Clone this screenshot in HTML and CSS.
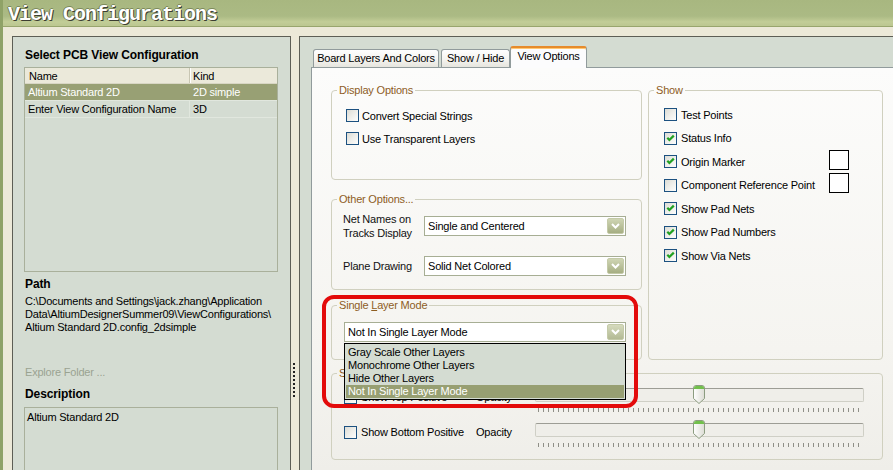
FILE: index.html
```html
<!DOCTYPE html>
<html>
<head>
<meta charset="utf-8">
<title>View Configurations</title>
<link rel="stylesheet" href="styles.css">
</head>
<body>
<div class="window">
  <div class="titlebar">View Configurations</div>
  <div class="main">
    <div class="left-panel">
      <div class="heading first">Select PCB View Configuration</div>
      <div class="config-table">
        <div class="trow thead"><div class="c1">Name</div><div class="c2">Kind</div></div>
        <div class="trow selected"><div class="c1">Altium Standard 2D</div><div class="c2">2D simple</div></div>
        <div class="trow"><div class="c1">Enter View Configuration Name</div><div class="c2">3D</div></div>
      </div>
      <div class="heading">Path</div>
      <div class="path">C:\Documents and Settings\jack.zhang\Application<br>Data\AltiumDesignerSummer09\ViewConfigurations\<br>Altium Standard 2D.config_2dsimple</div>
      <div class="explore">Explore Folder ...</div>
      <div class="heading desc-head">Description</div>
      <div class="desc">Altium Standard 2D</div>
    </div>
    <div class="splitter"><div class="grip"></div></div>
    <div class="right-panel">
      <div class="tabs">
        <div class="tab t1">Board Layers And Colors</div>
        <div class="tab t2">Show / Hide</div>
        <div class="tab active">View Options</div>
      </div>
      <div class="tab-page">
        <div class="col-left">
          <fieldset class="grp">
            <legend>Display Options</legend>
            <div class="gb-display">
              <div class="chk-row"><span class="cb"></span><span>Convert Special Strings</span></div>
              <div class="chk-row"><span class="cb"></span><span>Use Transparent Layers</span></div>
            </div>
          </fieldset>
          <fieldset class="grp grp-other">
            <legend>Other Options...</legend>
            <div class="gb-other">
              <div class="opt-row">
                <div class="opt-label">Net Names on<br>Tracks Display</div>
                <div class="combo w202"><span class="val">Single and Centered</span><span class="btn"><svg width="9" height="6" viewBox="0 0 9 6"><path d="M1 1 L4.5 4.5 L8 1" fill="none" stroke="#fff" stroke-width="2"/></svg></span></div>
              </div>
              <div class="opt-row">
                <div class="opt-label">Plane Drawing</div>
                <div class="combo w202"><span class="val">Solid Net Colored</span><span class="btn"><svg width="9" height="6" viewBox="0 0 9 6"><path d="M1 1 L4.5 4.5 L8 1" fill="none" stroke="#fff" stroke-width="2"/></svg></span></div>
              </div>
            </div>
          </fieldset>
          <fieldset class="grp grp-single">
            <legend>Single <u>L</u>ayer Mode</legend>
            <div class="gb-single">
              <div class="combo w282"><span class="val">Not In Single Layer Mode</span><span class="btn light"><svg width="9" height="6" viewBox="0 0 9 6"><path d="M1 1 L4.5 4.5 L8 1" fill="none" stroke="#fff" stroke-width="2"/></svg></span></div>
            </div>
          </fieldset>
        </div>
        <fieldset class="grp grp-show">
          <legend>Show</legend>
          <div class="gb-show">
            <div class="show-row"><span class="cb"></span><span>Test Points</span></div>
            <div class="show-row"><span class="cb"><svg width="11" height="11" viewBox="0 0 11 11"><path d="M2.3 4.8 L4.4 7 L8.8 2.6" fill="none" stroke="#21a121" stroke-width="2.2"/></svg></span><span>Status Info</span></div>
            <div class="show-row"><span class="cb"><svg width="11" height="11" viewBox="0 0 11 11"><path d="M2.3 4.8 L4.4 7 L8.8 2.6" fill="none" stroke="#21a121" stroke-width="2.2"/></svg></span><span>Origin Marker</span><span class="swatch"></span></div>
            <div class="show-row"><span class="cb"></span><span>Component Reference Point</span><span class="swatch"></span></div>
            <div class="show-row"><span class="cb"><svg width="11" height="11" viewBox="0 0 11 11"><path d="M2.3 4.8 L4.4 7 L8.8 2.6" fill="none" stroke="#21a121" stroke-width="2.2"/></svg></span><span>Show Pad Nets</span></div>
            <div class="show-row"><span class="cb"><svg width="11" height="11" viewBox="0 0 11 11"><path d="M2.3 4.8 L4.4 7 L8.8 2.6" fill="none" stroke="#21a121" stroke-width="2.2"/></svg></span><span>Show Pad Numbers</span></div>
            <div class="show-row"><span class="cb"><svg width="11" height="11" viewBox="0 0 11 11"><path d="M2.3 4.8 L4.4 7 L8.8 2.6" fill="none" stroke="#21a121" stroke-width="2.2"/></svg></span><span>Show Via Nets</span></div>
          </div>
        </fieldset>
        <fieldset class="grp grp-bottom">
          <legend>Solder Mask</legend>
          <div class="gb-bottom">
            <div class="sl-row">
              <div class="sl-check"><span class="cb"></span><span>Show Top Positive</span></div>
              <div class="sl-op">Opacity</div>
              <div class="slider">
                <div class="track"></div>
                <div class="ticks"></div>
                <svg class="thumb" width="12" height="19" viewBox="0 0 12 19"><defs><linearGradient id="tb1" x1="0" y1="0" x2="1" y2="0"><stop offset="0" stop-color="#ffffff"/><stop offset="1" stop-color="#dcdcd4"/></linearGradient></defs><path d="M0.5 3 Q0.5 0.5 3 0.5 H9 Q11.5 0.5 11.5 3 V13.5 L6 18.5 L0.5 13.5 Z" fill="url(#tb1)" stroke="#8c9c80"/><path d="M1 3 Q1 1 3 1 H9 Q11 1 11 3 V4 H1 Z" fill="#72c04c"/></svg>
              </div>
            </div>
            <div class="sl-row">
              <div class="sl-check"><span class="cb"></span><span>Show Bottom Positive</span></div>
              <div class="sl-op">Opacity</div>
              <div class="slider">
                <div class="track"></div>
                <div class="ticks"></div>
                <svg class="thumb" width="12" height="19" viewBox="0 0 12 19"><defs><linearGradient id="tb2" x1="0" y1="0" x2="1" y2="0"><stop offset="0" stop-color="#ffffff"/><stop offset="1" stop-color="#dcdcd4"/></linearGradient></defs><path d="M0.5 3 Q0.5 0.5 3 0.5 H9 Q11.5 0.5 11.5 3 V13.5 L6 18.5 L0.5 13.5 Z" fill="url(#tb2)" stroke="#8c9c80"/><path d="M1 3 Q1 1 3 1 H9 Q11 1 11 3 V4 H1 Z" fill="#72c04c"/></svg>
              </div>
            </div>
          </div>
        </fieldset>
        <div class="droplist">
          <div>Gray Scale Other Layers</div>
          <div>Monochrome Other Layers</div>
          <div>Hide Other Layers</div>
          <div class="sel">Not In Single Layer Mode</div>
        </div>
        <div class="callout"></div>
      </div>
    </div>
  </div>
</div>
</body>
</html>
```
FILE: styles.css
```css
* { box-sizing: border-box; }
html, body { margin: 0; padding: 0; }
body {
  width: 893px;
  height: 470px;
  overflow: hidden;
  font-family: "Liberation Sans", Arial, sans-serif;
  font-size: 11px;
  letter-spacing: -0.2px;
  color: #000;
  background: #ece9d8;
}
.window {
  width: 893px;
  height: 470px;
  display: flex;
  flex-direction: column;
  border-left: 3px solid #8fa267;
  background: #ece9d8;
  overflow: hidden;
}
.titlebar {
  height: 27px;
  flex: none;
  padding: 4px 0 0 5px;
  line-height: 22px;
  font-family: "Liberation Mono", monospace;
  font-weight: bold;
  font-size: 20px;
  letter-spacing: -1px;
  color: #fff;
  text-shadow: 1px 1px 0 #3c3d32, -1px 0 0 #6f7c52, 0 -1px 0 #7d8a5c;
  background: linear-gradient(#a8b780 0, #abba84 62%, #c2cd97 84%, #bdc892 96%);
  border-bottom: 1px solid #98a56d;
  white-space: nowrap;
}
.main {
  flex: 1;
  display: flex;
  padding: 9px 0 0 9px;
  min-height: 0;
}
.left-panel {
  width: 279px;
  flex: none;
  border: 1px solid #5d5e55;
  border-bottom: none;
  background: #d4dcd2;
}
.heading {
  font-weight: bold;
  font-size: 12px;
  letter-spacing: -0.1px;
  line-height: 14px;
  padding-left: 12px;
  margin-top: 5px;
}
.heading.first { margin-top: 11px; }
.config-table {
  margin: 5px 0 0 11px;
  width: 254px;
  height: 205px;
  border: 1px solid #a9b09b;
}
.trow {
  display: flex;
  height: 17px;
  line-height: 16px;
  border-bottom: 1px solid #e1e7de;
  white-space: nowrap;
}
.trow .c1 { width: 165px; padding-left: 3px; border-right: 1px solid #e1e7de; }
.trow .c2 { flex: 1; padding-left: 3px; }
.trow.thead {
  height: 16px;
  line-height: 16px;
  background: #ebe9da;
  border-bottom: 1px solid #d8d6c4;
}
.trow.thead .c1 { padding-left: 4px; border-right: 1px solid #c8c6b3; }
.trow.thead .c2 { box-shadow: inset 1px 0 #fff; }
.trow.selected { background: #98a074; color: #fff; }
.trow.selected .c1 { border-right-color: #98a074; }
.path {
  margin-top: 4px;
  padding-left: 12px;
  line-height: 13px;
  white-space: nowrap;
}
.explore {
  margin-top: 32px;
  padding-left: 12px;
  line-height: 13px;
  color: #9aa391;
}
.heading.desc-head { margin-top: 8px; }
.desc {
  margin: 6px 0 0 11px;
  width: 254px;
  height: 80px;
  border: 1px solid #a9b09b;
  padding: 3px 2px;
  line-height: 13px;
}
.splitter { width: 8px; flex: none; }
.grip {
  margin: 327px 0 0 2px;
  width: 2px;
  height: 34px;
  background: repeating-linear-gradient(#222 0 2px, transparent 2px 4px);
}
.right-panel {
  flex: 1;
  display: flex;
  flex-direction: column;
  border-left: 1px solid #5d5e55;
  border-top: 1px solid #5d5e55;
  background: #d4dcd2;
  min-width: 0;
}
.tabs {
  display: flex;
  align-items: flex-end;
  height: 30px;
  flex: none;
  margin-left: 13px;
}
.tab {
  height: 18px;
  line-height: 17px;
  text-align: center;
  border: 1px solid #919b9c;
  border-bottom: none;
  border-radius: 3px 3px 0 0;
  background: linear-gradient(#fefefe, #f5f4f0 55%, #e6e5de);
  white-space: nowrap;
}
.tab.t1 { width: 126px; margin-right: 2px; }
.tab.t2 { width: 69px; }
.tab.active {
  width: 77px;
  height: 22px;
  margin-bottom: -1px;
  position: relative;
  z-index: 1;
  line-height: 17px;
  background: #fcfcfd;
  border-top: 2px solid #e68b2c;
  box-shadow: inset 0 1px #ffc873;
}
.tab-page {
  flex: 1;
  margin-left: 11px;
  border-left: 1px solid #919b9c;
  border-top: 1px solid #919b9c;
  background: linear-gradient(#fcfcfb, #f5f4f0 70%, #efeee9);
  position: relative;
  display: grid;
  grid-template-columns: 311px 235px;
  column-gap: 6px;
  align-content: start;
  padding: 16px 0 0 19px;
}
.col-left { display: flex; flex-direction: column; }
.grp {
  margin: 0;
  padding: 0;
  border: 1px solid #d0d0bf;
  border-radius: 4px;
  min-width: 0;
}
.grp legend {
  margin-left: 5px;
  padding: 0 2px;
  line-height: 13px;
  color: #8e5d1f;
}
.gb-display { padding: 7px 0 29px 14px; }
.chk-row { display: flex; align-items: center; height: 23px; gap: 3px; }
.cb {
  width: 13px;
  height: 13px;
  flex: none;
  border: 1px solid #1c5180;
  background: linear-gradient(135deg, #dcdcd5 0%, #eeeeea 50%, #fdfdfc 100%);
  display: flex;
}
.grp-other { margin-top: 13px; }
.gb-other { padding: 6px 15px 9px 11px; }
.opt-row { display: flex; align-items: center; height: 28px; }
.opt-row + .opt-row { margin-top: 12px; }
.opt-label { width: 81px; line-height: 14px; color: #111; }
.combo {
  display: flex;
  align-items: center;
  height: 20px;
  border: 1px solid #a7ae94;
  background: #fff;
  padding: 0 1px 0 3px;
  white-space: nowrap;
}
.combo.w202 { width: 202px; }
.combo.w282 { width: 282px; }
.combo .val { flex: 1; }
.combo .btn {
  width: 17px;
  height: 16px;
  border-radius: 2px;
  border: 1px solid #c4caa8;
  background: linear-gradient(#cfd5b4, #a6ae83);
  display: flex;
  align-items: center;
  justify-content: center;
}
.combo .btn.light { background: linear-gradient(#d5dabd, #b3ba94); }
.grp-single { margin-top: 9px; }
.gb-single { padding: 10px 0 17px 12px; }
.gb-show { padding: 6px 33px 0 15px; }
.show-row { display: flex; align-items: center; height: 23.5px; gap: 4px; white-space: nowrap; }
.swatch {
  width: 20px;
  height: 20px;
  margin-left: auto;
  margin-bottom: 4px;
  border: 1px solid #000;
  background: #fff;
}
.grp-bottom { grid-column: 1 / -1; margin-top: 7px; }
.gb-bottom { padding: 2.5px 0 6px 12px; }
.sl-row { display: flex; align-items: flex-start; height: 35px; }
.sl-check { width: 132px; height: 29px; display: flex; align-items: center; gap: 4px; white-space: nowrap; }
.sl-op { width: 59px; height: 29px; line-height: 28px; }
.slider { width: 329px; position: relative; padding-top: 5px; }
.track {
  height: 14px;
  border: 1px solid #cfcfc6;
  border-top-color: #9d9d95;
  border-radius: 2px;
  background: #efeee9;
}
.ticks {
  margin: 6px 0 0 3px;
  width: 323px;
  height: 4px;
  background: repeating-linear-gradient(90deg, #8f8f87 0 1px, transparent 1px 5px);
}
.thumb { position: absolute; left: 158px; top: 2px; }
.droplist {
  position: absolute;
  left: 32px;
  top: 275px;
  width: 282px;
  border: 1px solid #000;
  background: #d4dcd2;
  padding: 2px 1px 1px;
  z-index: 2;
  white-space: nowrap;
}
.droplist div { height: 13px; line-height: 13px; padding-left: 2px; }
.droplist .sel { background: #979f72; color: #fff; }
.callout {
  position: absolute;
  left: 10px;
  top: 227px;
  width: 316px;
  height: 113px;
  border: 4px solid #e30b0b;
  border-radius: 12px;
  z-index: 3;
  pointer-events: none;
}
```
